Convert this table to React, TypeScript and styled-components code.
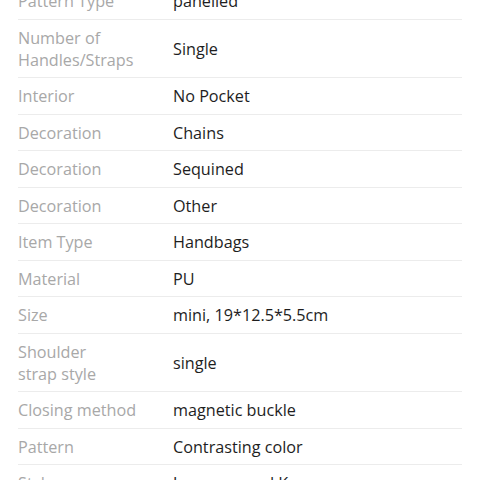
import React from "react";
import styled, { createGlobalStyle } from "styled-components";

const Global = createGlobalStyle`
  html, body { margin: 0; padding: 0; background: #fff; overflow: hidden; }
  body { font-family: "Open Sans", "Noto Sans", sans-serif; }
`;

const Page = styled.div`
  width: 480px;
  height: 480px;
  overflow: hidden;
  background: #fff;
`;

const List = styled.div`
  margin: -16.75px 18px 0;
`;

const Row = styled.div`
  display: grid;
  grid-template-columns: 155px 1fr;
  align-items: center;
  padding: 6.75px 0;
  border-bottom: 1px solid #ececec;
  font-size: 16.2px;
  line-height: 22px;
`;

const Label = styled.div`
  color: #a8a8a8;
`;

const Value = styled.div`
  color: #1e1e1e;
`;

type Spec = { label: string[]; value: string };

const specs: Spec[] = [
  { label: ["Pattern Type"], value: "panelled" },
  { label: ["Number of", "Handles/Straps"], value: "Single" },
  { label: ["Interior"], value: "No Pocket" },
  { label: ["Decoration"], value: "Chains" },
  { label: ["Decoration"], value: "Sequined" },
  { label: ["Decoration"], value: "Other" },
  { label: ["Item Type"], value: "Handbags" },
  { label: ["Material"], value: "PU" },
  { label: ["Size"], value: "mini, 19*12.5*5.5cm" },
  { label: ["Shoulder", "strap style"], value: "single" },
  { label: ["Closing method"], value: "magnetic buckle" },
  { label: ["Pattern"], value: "Contrasting color" },
  { label: ["Style"], value: "Japanese and Korean" },
];

export default function App() {
  return (
    <Page>
      <Global />
      <List>
        {specs.map((s, i) => (
          <Row key={i}>
            <Label>
              {s.label.map((l, j) => (
                <React.Fragment key={j}>
                  {j > 0 && <br />}
                  {l}
                </React.Fragment>
              ))}
            </Label>
            <Value>{s.value}</Value>
          </Row>
        ))}
      </List>
    </Page>
  );
}
